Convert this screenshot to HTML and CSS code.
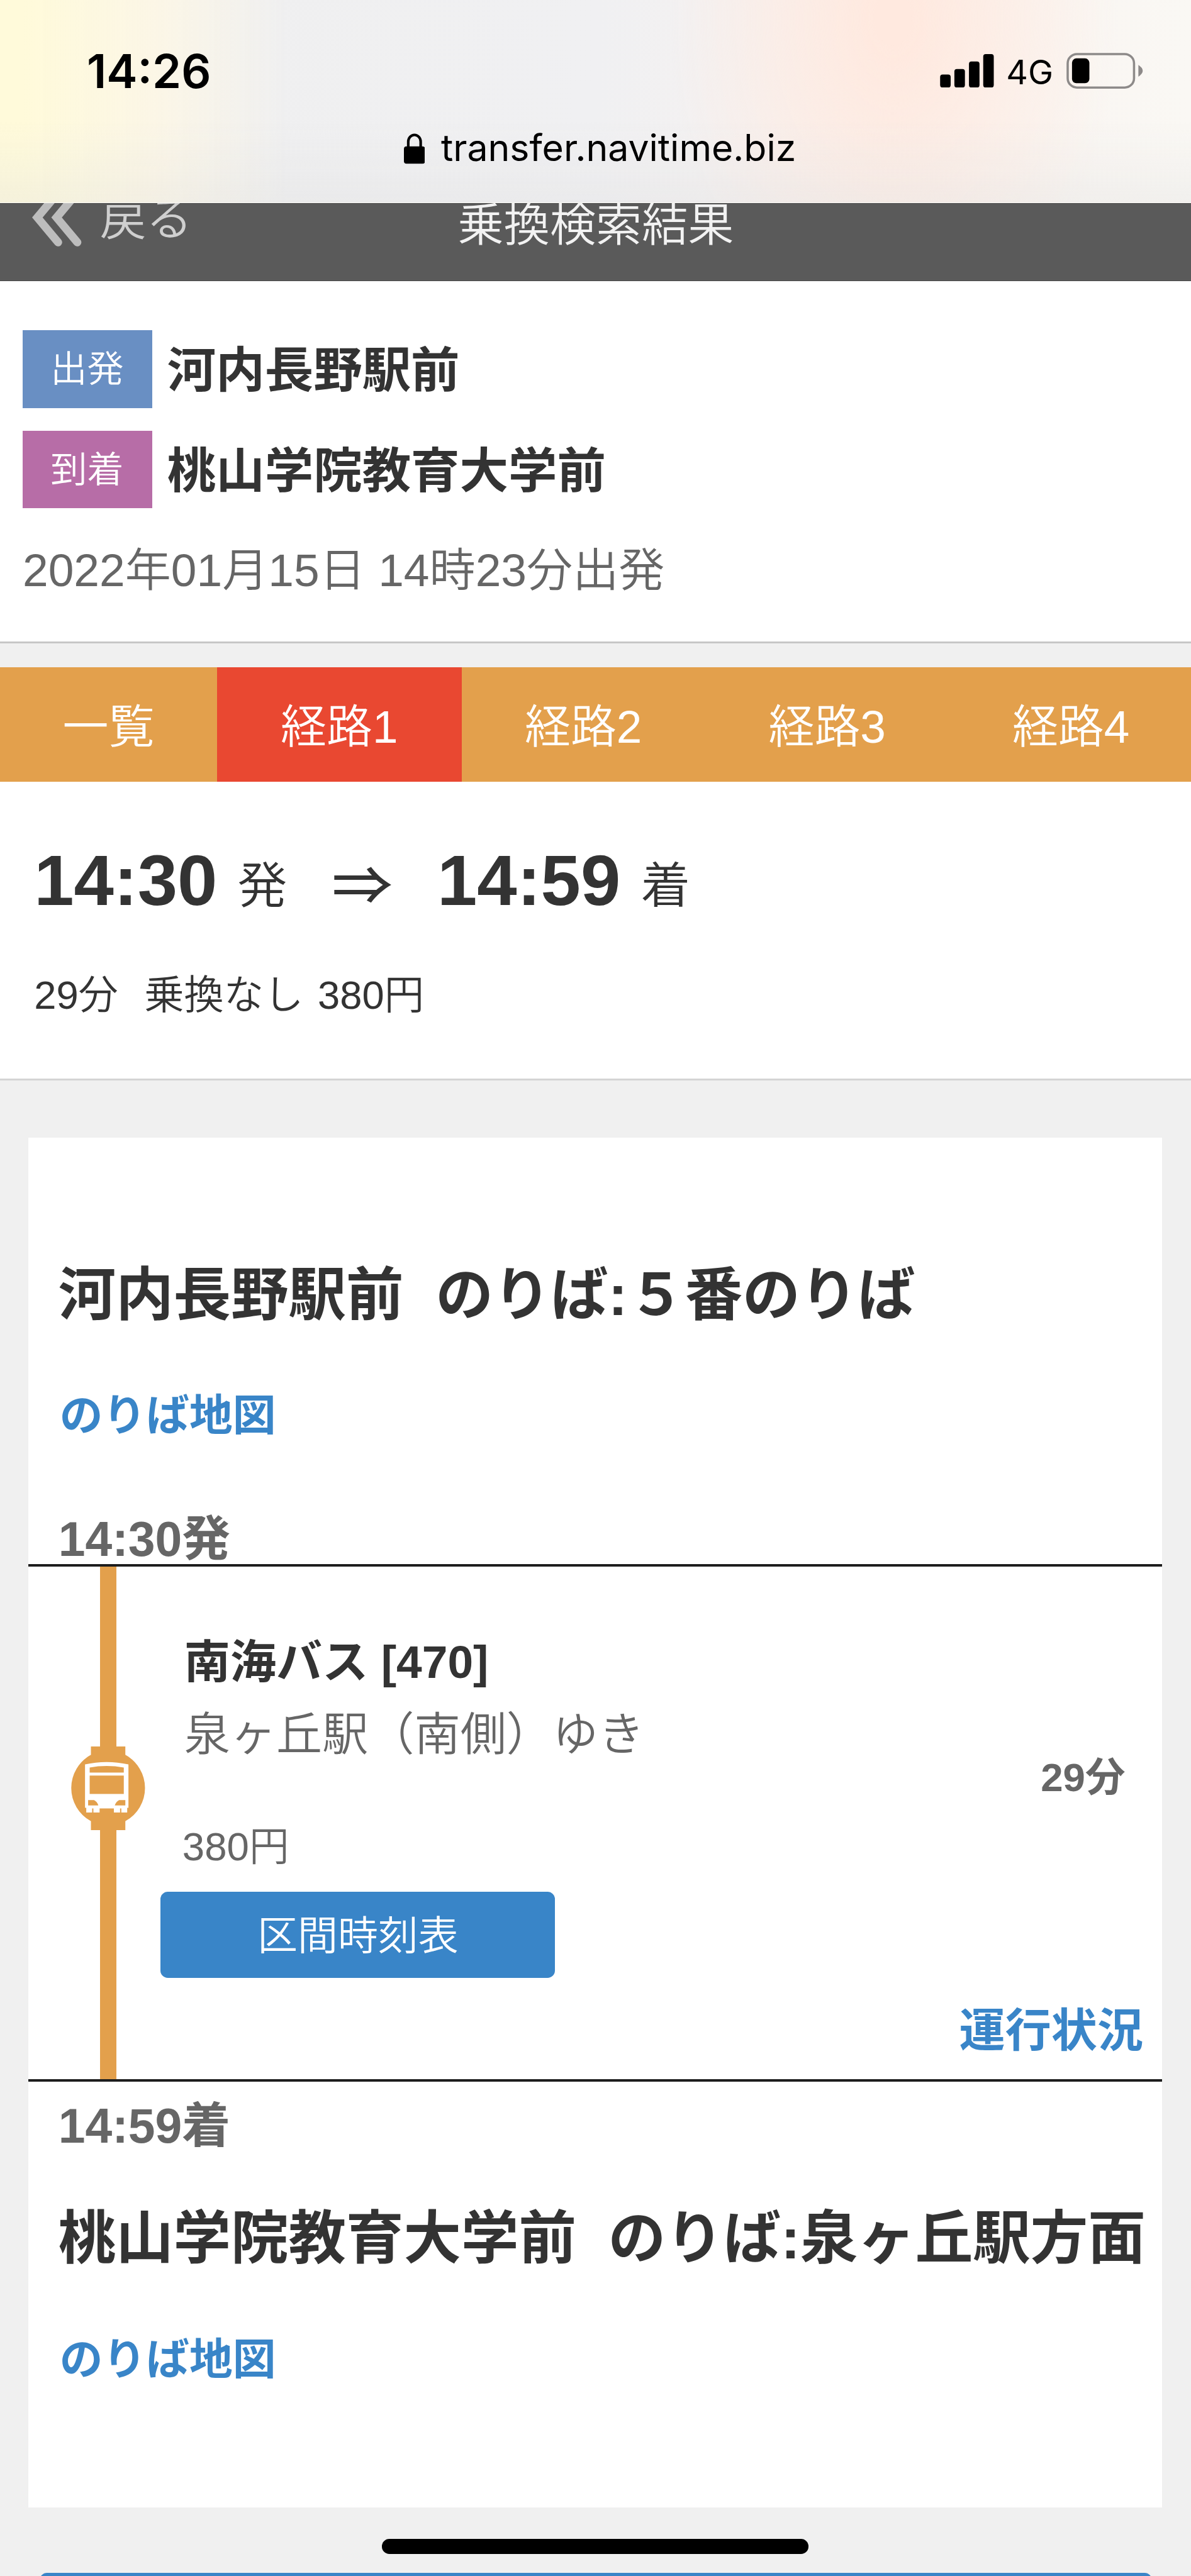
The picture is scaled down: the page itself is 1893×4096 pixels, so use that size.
FILE: index.html
```html
<!DOCTYPE html>
<html lang="ja">
<head>
<meta charset="utf-8">
<title>乗換検索結果</title>
<link rel="stylesheet" href="styles.css">
</head>
<body>
<div class="page">
  <header class="browser">
    <div class="status">
      <span class="clock">14:26</span>
      <div class="indicators">
        <svg class="signal" viewBox="0 0 86 54"><rect x="0" y="33" width="17" height="21" rx="4"/><rect x="23" y="24" width="17" height="30" rx="4"/><rect x="46.500" y="12" width="17" height="42" rx="4"/><rect x="69.500" y="0" width="17" height="54" rx="4"/></svg>
        <span class="network">4G</span>
        <svg class="battery" viewBox="0 0 124 58"><rect x="2" y="2" width="107" height="54" rx="15" fill="none" stroke="#8d8a89" stroke-width="3.600"/><rect x="9" y="9" width="28" height="40" rx="7"/><path d="M116 19.500Q123 24 123 29T116 38.500Z" fill="#8d8a89"/></svg>
      </div>
    </div>
    <div class="address">
      <svg class="lock" viewBox="0 0 34 50"><path d="M7 24V13.500a10 11 0 0 1 20 0V24" fill="none" stroke="#000" stroke-width="4.200"/><rect x="0" y="21" width="34" height="28" rx="4"/></svg>
      <span class="url">transfer.navitime.biz</span>
    </div>
  </header>

  <nav class="titlebar">
    <a class="back"><svg class="chevrons" viewBox="0 0 84 94"><path d="M43 6.500 9.500 46.500 43 86.500M74 6.500 40.500 46.500 74 86.500" fill="none" stroke="#bdbdbd" stroke-width="13" stroke-linecap="round"/></svg><span class="back-label">戻る</span></a>
    <h1 class="heading">乗換検索結果</h1>
  </nav>

  <section class="query">
    <div class="place"><span class="tag tag-from">出発</span><span class="place-name">河内長野駅前</span></div>
    <div class="place"><span class="tag tag-to">到着</span><span class="place-name">桃山学院教育大学前</span></div>
    <p class="date">2022年01月15日 14時23分出発</p>
  </section>

  <nav class="tabs">
    <a class="tab tab-list">一覧</a><a class="tab tab-active">経路1</a><a class="tab">経路2</a><a class="tab">経路3</a><a class="tab">経路4</a>
  </nav>

  <section class="trip">
    <p class="times"><b>14:30</b><span class="mark">発</span><span class="arrow">⇒</span><b>14:59</b><span class="mark">着</span></p>
    <p class="facts"><span>29分</span><span>乗換なし</span><span>380円</span></p>
  </section>

  <main class="route">
    <h2 class="stop stop-from">河内長野駅前&nbsp; のりば:５番のりば</h2>
    <a class="map map-from">のりば地図</a>
    <p class="time">14:30発</p>
    <div class="leg">
      <div class="rail">
        <span class="rail-top"></span>
        <svg class="bus" viewBox="0 0 125 135">
          <path d="M35 0h55.500v13.500a61 61 0 0 1 0 107V135H35v-14.500a61 61 0 0 1 0-107Z" fill="#e3a04c"/>
          <path fill="#fff" fill-rule="evenodd" d="M25.500 29Q60 21 95.500 29V99h-2v7.500H84V100h-2v6.500H72V100H49v6.500H39V100h-2v6.500H27.500V99h-2ZM33 34v8h55v-8Q60 29 33 34ZM33 47v29.500h55V47ZM30.500 86.500v8.500H47q-2-6-7-8.500ZM90.500 86.500v8.500H73.500q2-6 7-8.500Z"/>
        </svg>
        <span class="rail-bottom"></span>
      </div>
      <div class="details">
        <p class="line">南海バス [470]</p>
        <p class="bound">泉ヶ丘駅（南側）ゆき</p>
        <p class="fare">380円</p>
        <a class="timetable">区間時刻表</a>
      </div>
      <div class="side">
        <p class="duration">29分</p>
        <a class="service">運行状況</a>
      </div>
    </div>
    <p class="time time-to">14:59着</p>
    <h2 class="stop stop-to">桃山学院教育大学前&nbsp; のりば:泉ヶ丘駅方面</h2>
    <a class="map map-to">のりば地図</a>
  </main>
  <div class="next"></div>
  <div class="home"></div>
</div>
</body>
</html>
```
FILE: styles.css
```css
/* 1rem stands for 100 design units */
html { font-size: 98.59px; }
* { box-sizing: border-box; }
body {
  margin: 0;
  background: #f0f0f0;
  font-family: "Liberation Sans", "Noto Sans CJK JP", sans-serif;
  font-weight: 350;
  color: #333;
}
p, h1, h2 { margin: 0; font-weight: inherit; white-space: nowrap; }
svg { display: block; flex: none; }
.page {
  position: relative;
  height: 4096px;
  overflow: hidden;
  display: flex;
  flex-direction: column;
}
.page > * { flex: none; }

.browser {
  position: relative;
  z-index: 1;
  height: 3.28rem;
  border-bottom: 0.02rem solid #f8f7f3;
  background:
    linear-gradient(to bottom, rgba(225,225,225,0) 60%, rgba(222,222,222,.3)),
    linear-gradient(to right, #fffada 0, #fffada 2%, rgba(255,248,228,.8) 13%, rgba(240,240,240,0) 24%),
    radial-gradient(ellipse 3.6rem 5.4rem at 14.4rem 0.3rem, #ffe9df 8%, rgba(255,233,228,0) 100%),
    linear-gradient(to right, #efefef 0, #f0f0f2 50%, #f9f3f0 75%, #faf8f4 100%);
  color: #000;
  font-family: Inter, sans-serif;
}
.status { display: flex; justify-content: space-between; height: 1.7rem; padding: 0.64rem 0.77rem 0 1.4rem; }
.clock { font-size: 0.75rem; font-weight: 600; line-height: 1.02rem; }
.indicators { display: flex; align-items: flex-start; }
.signal { width: 0.865rem; height: 0.54rem; margin-top: 0.23rem; }
.network { flex: none; width: 1.17rem; padding-left: 0.2rem; font-size: 0.545rem; font-weight: 400; line-height: 1.05rem; }
.battery { width: 1.24rem; height: 0.58rem; margin-top: 0.21rem; }
.address { display: flex; padding: 0.18rem 0 0 6.51rem; }
.lock { width: 0.34rem; height: 0.5rem; margin-top: 0.27rem; }
.url { margin-left: 0.26rem; font-size: 0.598rem; font-weight: 400; line-height: 1.02rem; }

.titlebar {
  display: flex;
  height: 1.25rem;
  background: #5a5a5a;
  border-top: 0.02rem solid #454545;
  border-bottom: 0.02rem solid #4a4a4a;
}
.back { display: flex; width: 7.38rem; padding-left: 0.51rem; }
.chevrons { width: 0.84rem; height: 0.94rem; margin-top: -0.25rem; }
.back-label { margin: -0.28rem 0 0 0.26rem; color: #cfcfcf; font-size: 0.745rem; line-height: 1.06rem; }
.heading { margin-top: -0.16rem; color: #f2f2f2; font-size: 0.742rem; line-height: 1rem; }

.query { height: 5.85rem; padding: 0.8rem 0 0 0.365rem; background: #fff; border-bottom: 0.04rem solid #c7c7c7; }
.place { display: flex; height: 1.25rem; margin-bottom: 0.37rem; line-height: 1.26rem; }
.tag { width: 2.09rem; padding-right: 0.01rem; color: #fff; font-size: 0.59rem; text-align: center; }
.tag-from { background: #698fc3; }
.tag-to { background: #b76da7; }
.place-name { margin-left: 0.24rem; font-size: 0.786rem; font-weight: 700; line-height: 1.3rem; }
.date { margin-top: 0.5rem; color: #666; font-size: 0.742rem; line-height: 1rem; }

.tabs { display: flex; height: 1.85rem; margin-top: 0.38rem; background: #e3a04c; color: #fff; font-size: 0.74rem; line-height: 1.93rem; }
.tab { flex: none; width: 3.93rem; text-align: center; }
.tab-list { width: 3.5rem; }
.tab-active { width: 3.94rem; background: #e94831; }

.trip { height: 4.82rem; padding: 0.8rem 0 0 0.55rem; background: #fff; border-bottom: 0.04rem solid #d4d4d4; }
.times { display: flex; height: 1.6rem; line-height: 1.59rem; font-size: 1.155rem; }
.times b { width: 3.28rem; font-weight: 700; }
.mark { width: 0.8rem; font-size: 0.8rem; line-height: 1.78rem; }
.arrow { width: 2.42rem; padding-left: 0.72rem; font-size: 0.98rem; line-height: 1.64rem; font-family: "Noto Sans CJK JP", sans-serif; font-weight: 500; transform: scaleY(.86); }
.facts { display: flex; margin-top: 0.54rem; font-size: 0.642rem; line-height: 1rem; }
.facts span:nth-child(2) { margin: 0 0.23rem 0 0.42rem; }

.route { height: 22.09rem; margin: 0.92rem 0.465rem 0 0.46rem; background: #fff; }
.stop { padding-left: 0.48rem; font-size: 0.928rem; font-weight: 700; line-height: 1.2rem; }
.stop-from { padding-top: 1.94rem; }
.map { display: block; padding-left: 0.5rem; color: #3985c8; font-size: 0.698rem; font-weight: 700; line-height: 1rem; }
.map-from { padding-top: 0.86rem; }
.time { padding-left: 0.48rem; color: #666; font-size: 0.78rem; font-weight: 700; line-height: 0.8rem; }
.map-from + .time { padding-top: 1.075rem; }
.leg { display: flex; height: 8.345rem; border: solid #1d1d1d; border-width: 0.05rem 0; }
.rail { display: flex; flex-direction: column; align-items: center; width: 1.25rem; margin-left: 0.66rem; }
.rail-top, .rail-bottom { width: 0.27rem; background: #e3a04c; }
.rail-top { height: 2.9rem; }
.rail-bottom { flex: 1; }
.bus { width: 1.25rem; height: 1.35rem; }
.details { width: 8rem; padding: 1.15rem 0 0 0.22rem; color: #666; line-height: 0.8rem; }
.line { padding-left: 0.38rem; color: #333; font-size: 0.742rem; font-weight: 700; }
.bound { padding: 0.36rem 0 0 0.38rem; font-size: 0.742rem; }
.fare { padding: 1.01rem 0 0 0.35rem; font-size: 0.645rem; }
.timetable { display: block; width: 6.36rem; height: 1.39rem; margin-top: 0.33rem; border-radius: 0.12rem; background: #3985c8; color: #fff; font-size: 0.648rem; line-height: 1.42rem; text-align: center; }
.side { flex: 1; padding: 3rem 0.305rem 0 0; font-weight: 700; line-height: 0.8rem; text-align: right; }
.duration { padding-right: 0.29rem; color: #666; font-size: 0.645rem; }
.service { display: block; margin-top: 3.29rem; color: #3985c8; font-size: 0.742rem; }
.time-to { padding-top: 0.315rem; }
.stop-to { padding-top: 0.82rem; }
.map-to { padding-top: 0.87rem; }

.next { height: 1.4rem; margin: 1.06rem 0.63rem 0 0.64rem; border-radius: 0.12rem; background: #3985c8; }
.home { position: absolute; left: 6.16rem; top: 40.95rem; width: 6.87rem; height: 0.24rem; border-radius: 0.12rem; background: #000; }
```
